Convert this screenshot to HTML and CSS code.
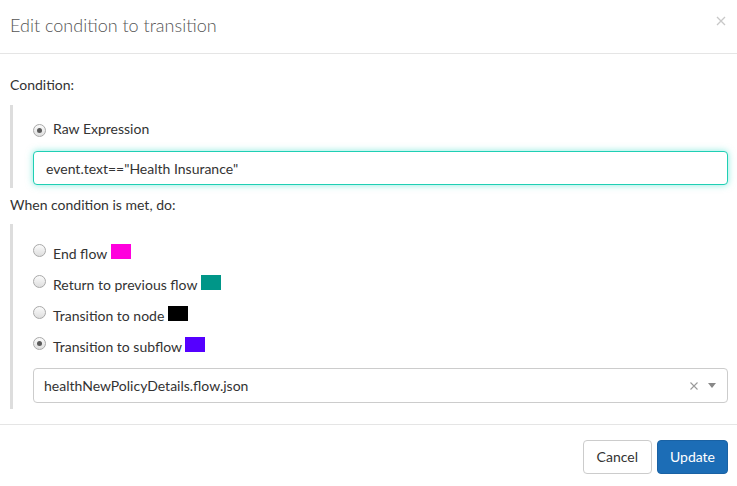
FILE: index.html
```html
<!DOCTYPE html>
<html>
<head>
<meta charset="utf-8">
<link rel="stylesheet" href="styles.css">
</head>
<body>
<div class="modal">
  <div class="modal-header">
    <h4 class="modal-title">Edit condition to transition</h4>
    <button class="close" aria-label="Close">
      <svg width="10" height="10" viewBox="0 0 10 10"><path d="M1 1 L9 9 M9 1 L1 9" stroke="#c8c8c8" stroke-width="1.3" fill="none"/></svg>
    </button>
  </div>
  <div class="modal-body">
    <div class="field-label">Condition:</div>
    <div class="group group-cond">
      <label class="option option-first"><span class="radio checked"></span><span class="opt-text">Raw Expression</span></label>
      <input class="text-input" type="text" value="event.text==&quot;Health Insurance&quot;">
    </div>
    <div class="field-label field-label-2">When condition is met, do:</div>
    <div class="group group-action">
      <label class="option"><span class="radio"></span><span class="opt-text">End flow <span class="swatch swatch-pink"></span></span></label>
      <label class="option"><span class="radio"></span><span class="opt-text">Return to previous flow <span class="swatch swatch-teal"></span></span></label>
      <label class="option"><span class="radio"></span><span class="opt-text">Transition to node <span class="swatch swatch-black"></span></span></label>
      <label class="option"><span class="radio checked"></span><span class="opt-text">Transition to subflow <span class="swatch swatch-purple"></span></span></label>
      <div class="select">
        <span class="select-value">healthNewPolicyDetails.flow.json</span>
        <span class="select-clear">
          <svg width="8" height="8" viewBox="0 0 8 8"><path d="M0.5 0.5 L7.5 7.5 M7.5 0.5 L0.5 7.5" stroke="#9a9a9a" stroke-width="1.1" fill="none"/></svg>
        </span>
        <span class="select-arrow"></span>
      </div>
    </div>
  </div>
  <div class="modal-footer">
    <button class="btn btn-default">Cancel</button>
    <button class="btn btn-primary">Update</button>
  </div>
</div>
</body>
</html>
```
FILE: styles.css
```css
* { box-sizing: border-box; }
html, body { margin: 0; padding: 0; background: #fff; }
body {
  font-family: Lato, "Open Sans", "Liberation Sans", sans-serif;
  font-size: 14px;
  line-height: 20px;
  color: #333;
  width: 737px;
  height: 486px;
  overflow: hidden;
}
.modal-header {
  display: flex;
  align-items: flex-start;
  justify-content: space-between;
  padding: 13px 10px 16px 10px;
  border-bottom: 1px solid #e5e5e5;
}
.modal-title {
  margin: 0;
  font-size: 18px;
  line-height: 24px;
  font-weight: 300;
  color: #555;
}
.close {
  border: 0;
  background: transparent;
  padding: 0;
  margin: 3px 1px 0 0;
  width: 10px;
  height: 10px;
  display: block;
}
.close svg { display: block; }
.modal-body {
  padding: 21px 9px 15px 10px;
}
.field-label {
  margin-bottom: 10px;
}
.field-label-2 {
  margin-top: 7px;
  margin-bottom: 9px;
}
.group {
  border-left: 3px solid #ddd;
  padding-left: 20px;
}
.group-cond {
  padding-top: 14px;
  padding-bottom: 3px;
}
.group-action {
  padding-top: 20px;
  padding-bottom: 6px;
}
.option {
  display: flex;
  align-items: flex-start;
  height: 20px;
  margin-bottom: 11px;
}
.option-first { margin-bottom: 12px; }
.option-first .radio { margin-top: 5px; }
.radio {
  flex: 0 0 auto;
  width: 13px;
  height: 13px;
  border-radius: 50%;
  border: 1px solid #a9a9a9;
  background: linear-gradient(#fbfbfb, #dedede);
  margin-right: 7px;
  margin-top: 0;
  position: relative;
}
.radio.checked::after {
  content: "";
  position: absolute;
  left: 3px;
  top: 3px;
  width: 5px;
  height: 5px;
  border-radius: 50%;
  background: #5a5a5a;
}
.opt-text { white-space: nowrap; }
.swatch {
  display: inline-block;
  width: 20px;
  height: 15px;
  vertical-align: baseline;
}
.swatch-pink { background: #ff00dd; }
.swatch-teal { background: #009688; }
.swatch-black { background: #000; }
.swatch-purple { background: #5500ff; }
.text-input {
  display: block;
  width: 100%;
  height: 34px;
  padding: 0 12px;
  font-family: inherit;
  font-size: 14px;
  color: #333;
  border: 1px solid #1fcfb4;
  border-radius: 4px;
  box-shadow: 0 0 7px rgba(40, 215, 195, 0.55);
  outline: none;
  background: #fff;
}
.select {
  display: flex;
  align-items: center;
  height: 35px;
  border: 1px solid #ccc;
  border-radius: 4px;
  padding: 0 11px 0 10px;
  background: #fff;
}
.select-value { flex: 1 1 auto; color: #333; }
.select-clear { display: flex; margin-right: 10px; }
.select-clear svg { display: block; }
.select-arrow {
  width: 0;
  height: 0;
  border-style: solid;
  border-width: 5px 4px 0 4px;
  border-color: #888 transparent transparent transparent;
}
.modal-footer {
  display: flex;
  justify-content: flex-end;
  gap: 5px;
  border-top: 1px solid #e5e5e5;
  padding: 15px 9px 15px 10px;
}
.btn {
  font-family: inherit;
  font-size: 14px;
  line-height: 20px;
  height: 34px;
  padding: 0 12px;
  border-radius: 4px;
  border: 1px solid #ccc;
  background: #fff;
  color: #333;
}
.btn-default { padding: 0 13px; }
.btn-primary {
  background: #1c6db6;
  border-color: #1a62a4;
  color: #fff;
  padding: 0 12px;
}
```
